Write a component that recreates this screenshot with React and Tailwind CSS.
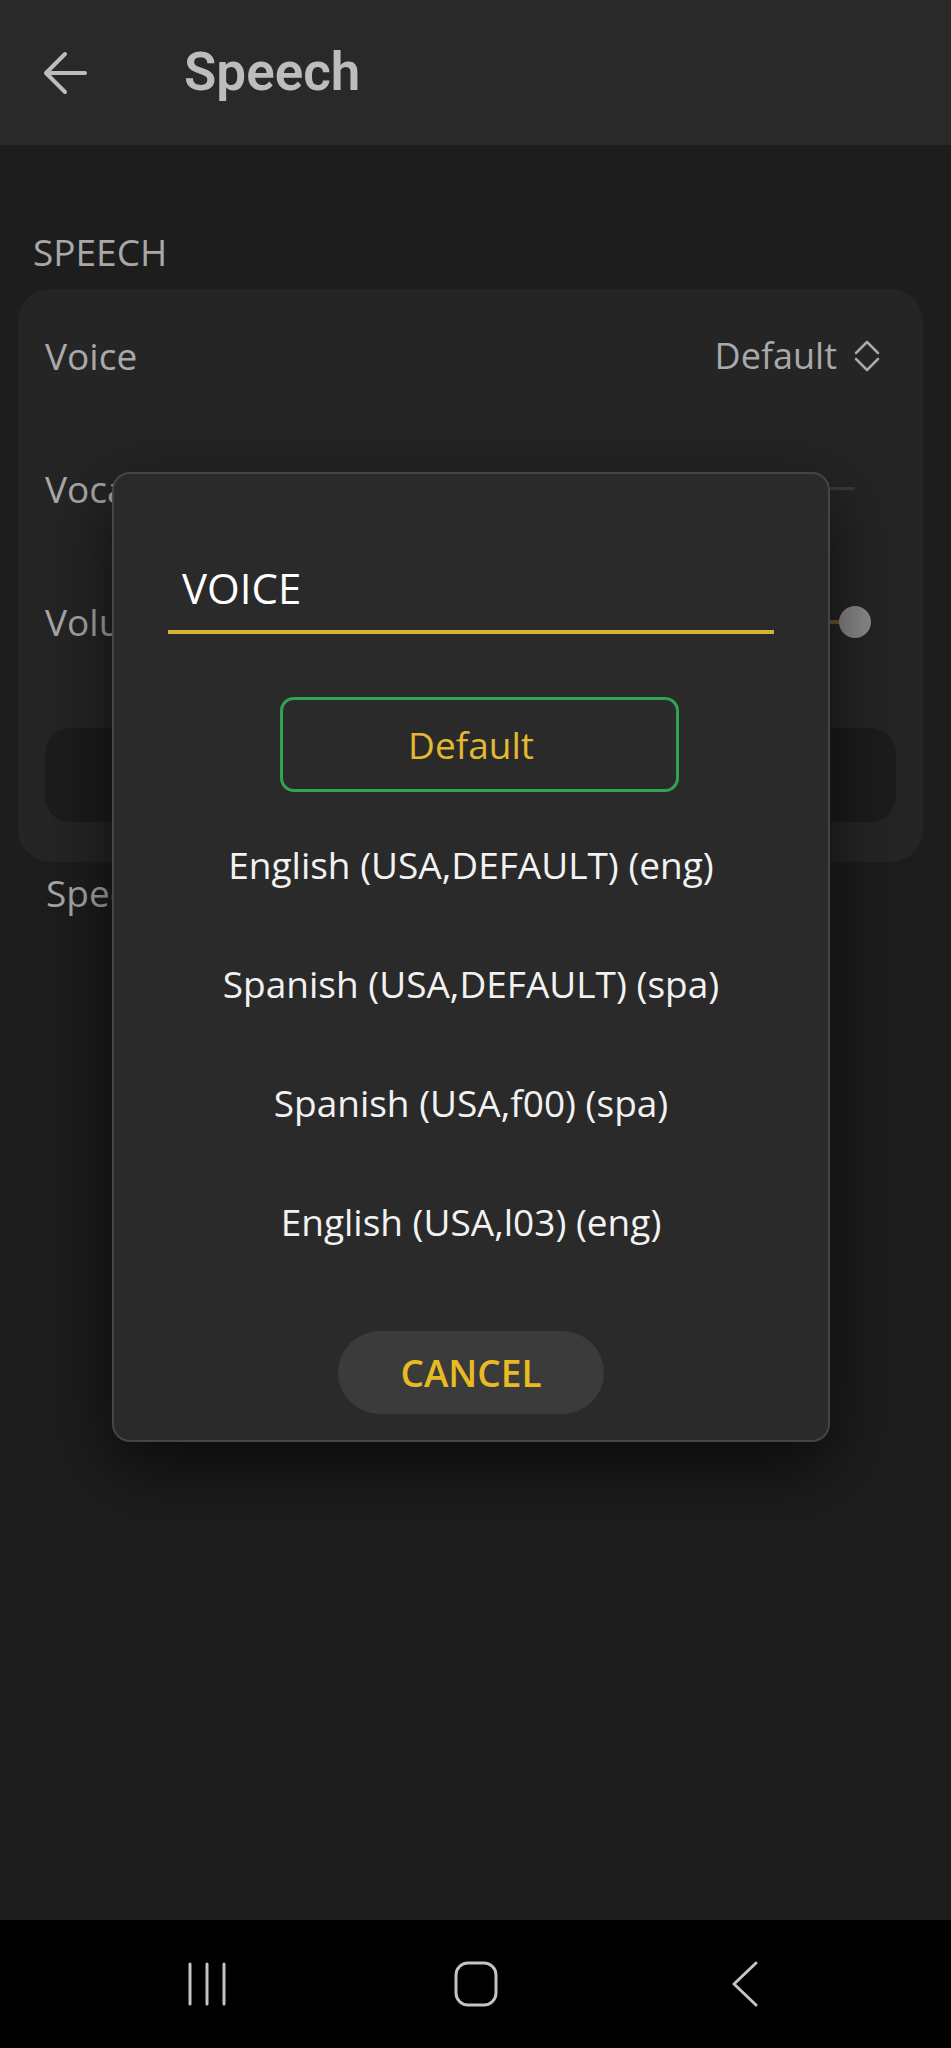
import React from 'react'

const font = { fontFamily: '"Open Sans", "Noto Sans", sans-serif' }

function BackArrow() {
  return (
    <svg width="46" height="44" viewBox="0 0 46 44" fill="none" stroke="#bdbdbd" strokeWidth="4" strokeLinecap="round" strokeLinejoin="round">
      <path d="M43 22H5" />
      <path d="M23 3L4 22l19 19" />
    </svg>
  )
}

function UpDown() {
  return (
    <svg width="26" height="32" viewBox="0 0 26 32" fill="none" stroke="#a9a9a9" strokeWidth="2.5" strokeLinecap="round" strokeLinejoin="round">
      <path d="M2 13L13 2l11 11" />
      <path d="M2 19l11 11 11-11" />
    </svg>
  )
}

const voices = [
  'English (USA,DEFAULT) (eng)',
  'Spanish (USA,DEFAULT) (spa)',
  'Spanish (USA,f00) (spa)',
  'English (USA,l03) (eng)',
]

export default function App() {
  return (
    <div className="relative h-[2048px] w-[951px] overflow-hidden bg-[#1d1d1d] flex flex-col" style={font}>
      {/* header */}
      <div className="h-[145px] shrink-0 bg-[#292929] flex items-center pl-[42px]">
        <BackArrow />
        <h1 className="ml-[96px] text-[53px] font-semibold text-[#bdbdbd] leading-none" style={{ fontFamily: 'Roboto, "Liberation Sans", sans-serif' }}>Speech</h1>
      </div>

      <div className="flex-1 px-[18px]">
        <div className="mt-[88px] h-[36px] flex items-center pl-[15px] text-[37px] leading-none text-[#a8a8a8]">SPEECH</div>

        <div className="mt-[20px] w-[905px] rounded-[32px] bg-[#252525] px-[27px] pb-[40px]">
          <div className="h-[133px] flex items-center justify-between">
            <span className="text-[37px] text-[#a9a9a9]">Voice</span>
            <div className="flex items-center gap-[17px] pr-[16px]">
              <span className="text-[36px] text-[#a9a9a9]">Default</span>
              <UpDown />
            </div>
          </div>
          <div className="h-[133px] flex items-center justify-between">
            <span className="text-[37px] text-[#a9a9a9]">Vocal</span>
            <div className="w-[430px] h-[3px] mr-[41px] bg-[#3a3a3a] rounded-full" />
          </div>
          <div className="h-[133px] flex items-center justify-between">
            <span className="text-[37px] text-[#a9a9a9]">Volume</span>
            <div className="flex items-center mr-[25px]">
              <div className="w-[420px] h-[4px] bg-[#6b5a22] rounded-full" />
              <div className="w-[32px] h-[32px] -ml-[4px] rounded-full bg-[#8c8c8c]" />
            </div>
          </div>
          <div className="mt-[40px] h-[94px] rounded-[26px] bg-[#1c1c1c]" />
        </div>

        <div className="mt-[13px] h-[36px] flex items-center pl-[28px] text-[37px] text-[#a9a9a9]">Speech rate</div>
      </div>

      {/* navigation bar */}
      <div className="h-[128px] shrink-0 bg-black flex items-center justify-center gap-[209px]">
        <div className="w-[60px] flex justify-center">
          <svg width="40" height="44" viewBox="0 0 40 44" fill="none" stroke="#c4c4c4" strokeWidth="3" strokeLinecap="round">
            <path d="M3 2v40M20 2v40M37 2v40" />
          </svg>
        </div>
        <div className="w-[60px] flex justify-center">
          <svg width="44" height="46" viewBox="0 0 44 46" fill="none" stroke="#c4c4c4" strokeWidth="3">
            <rect x="2" y="2" width="40" height="42" rx="12" />
          </svg>
        </div>
        <div className="w-[60px] flex justify-center">
          <svg width="28" height="46" viewBox="0 0 28 46" fill="none" stroke="#c4c4c4" strokeWidth="3" strokeLinecap="round" strokeLinejoin="round">
            <path d="M25 2L3 23l22 21" />
          </svg>
        </div>
      </div>

      {/* voice dialog */}
      <div className="absolute left-[112px] top-[472px] w-[718px] rounded-[18px] border-2 border-[#454545] bg-[#2a2a2a] shadow-[0_24px_70px_rgba(0,0,0,0.65)] pb-[26px]">
        <div className="mx-[54px] mt-[93px] border-b-[4px] border-[#d6b232] pb-[22px]">
          <div className="pl-[14px] h-[41px] flex items-center text-[42px] leading-none text-white">VOICE</div>
        </div>
        <div className="mt-[63px] ml-[166px] w-[399px] h-[95px] rounded-[14px] border-[3px] border-[#2fa552] flex items-center justify-center pr-[17px] text-[37px] text-[#e3b930]">Default</div>
        <div className="mt-[13px]">
          {voices.map((v) => (
            <div key={v} className="h-[119px] flex items-center justify-center text-[37px] text-[#f2f2f2]">{v}</div>
          ))}
        </div>
        <div className="mt-[50px] flex justify-center">
          <div className="w-[266px] h-[83px] rounded-full bg-[#3b3b3b] flex items-center justify-center text-[37px] font-semibold text-[#e8bb22]">CANCEL</div>
        </div>
      </div>
    </div>
  )
}
